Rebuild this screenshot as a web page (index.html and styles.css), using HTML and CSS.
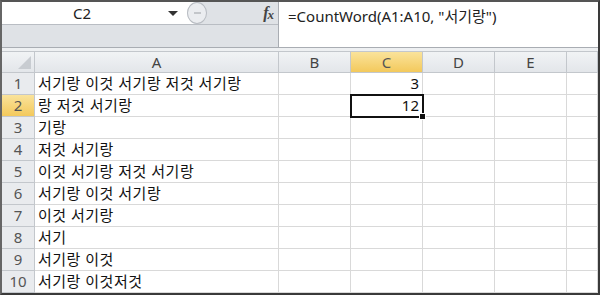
FILE: index.html
```html
<!DOCTYPE html>
<html lang="ko">
<head>
    <meta charset="UTF-8">
    <title>CountWord</title>
    <link rel="stylesheet" href="styles.css">
</head>
<body>
    <div class="frame">
        <div class="formula-bar">
            <div class="left-part">
                <div class="top-row">
                    <div class="name-box">
                        <span class="name">C2</span>
                        <span class="arrow"></span>
                    </div>
                    <div class="fx-box">
                        <span class="knob"><span class="dash"></span></span>
                        <span class="fx">f<span class="x">x</span></span>
                    </div>
                </div>
                <div class="bottom-row"></div>
            </div>
            <div class="formula">=CountWord(A1:A10, "서기랑")</div>
        </div>
        <div class="split"></div>

        <div class="sheet">
            <div class="hd corner"><span class="tri"></span></div>
            <div class="hd col">A</div>
            <div class="hd col">B</div>
            <div class="hd col sel">C</div>
            <div class="hd col">D</div>
            <div class="hd col">E</div>
            <div class="hd col"></div>

            <div class="hd row">1</div>
            <div class="cell">서기랑 이것 서기랑 저것 서기랑</div>
            <div class="cell"></div>
            <div class="cell num">3</div>
            <div class="cell"></div><div class="cell"></div><div class="cell"></div>

            <div class="hd row sel">2</div>
            <div class="cell">랑 저것 서기랑</div>
            <div class="cell"></div>
            <div class="cell num active">12</div>
            <div class="cell"></div><div class="cell"></div><div class="cell"></div>

            <div class="hd row">3</div>
            <div class="cell">기랑</div>
            <div class="cell"></div><div class="cell"></div><div class="cell"></div><div class="cell"></div><div class="cell"></div>

            <div class="hd row">4</div>
            <div class="cell">저것 서기랑</div>
            <div class="cell"></div><div class="cell"></div><div class="cell"></div><div class="cell"></div><div class="cell"></div>

            <div class="hd row">5</div>
            <div class="cell">이것 서기랑 저것 서기랑</div>
            <div class="cell"></div><div class="cell"></div><div class="cell"></div><div class="cell"></div><div class="cell"></div>

            <div class="hd row">6</div>
            <div class="cell">서기랑 이것 서기랑</div>
            <div class="cell"></div><div class="cell"></div><div class="cell"></div><div class="cell"></div><div class="cell"></div>

            <div class="hd row">7</div>
            <div class="cell">이것 서기랑</div>
            <div class="cell"></div><div class="cell"></div><div class="cell"></div><div class="cell"></div><div class="cell"></div>

            <div class="hd row">8</div>
            <div class="cell">서기</div>
            <div class="cell"></div><div class="cell"></div><div class="cell"></div><div class="cell"></div><div class="cell"></div>

            <div class="hd row">9</div>
            <div class="cell">서기랑 이것</div>
            <div class="cell"></div><div class="cell"></div><div class="cell"></div><div class="cell"></div><div class="cell"></div>

            <div class="hd row">10</div>
            <div class="cell">서기랑 이것저것</div>
            <div class="cell"></div><div class="cell"></div><div class="cell"></div><div class="cell"></div><div class="cell"></div>
        </div>
    </div>
</body>
</html>
```

FILE: styles.css
```css
* {
    box-sizing: border-box;
}

body {
    margin: 0;
    font-family: "Noto Sans", "Noto Sans CJK KR", sans-serif;
    background: #fff;
}

.frame {
    width: 600px;
    height: 295px;
    border: 2px solid #3a3a3a;
    border-top-color: #555;
    border-left-color: #666;
    overflow: hidden;
}

/* formula bar */
.formula-bar {
    display: flex;
    height: 45px;
}

.left-part {
    width: 277px;
    border-right: 1px solid #a9adb3;
    display: flex;
    flex-direction: column;
}

.top-row {
    display: flex;
    height: 23px;
    border-bottom: 1px solid #b9bdc3;
}

.name-box {
    width: 185px;
    background: #fff;
    display: flex;
    align-items: center;
}

.name {
    flex: 1;
    text-align: center;
    font-size: 15px;
    color: #222;
    padding-right: 6px;
}

.arrow {
    width: 0;
    height: 0;
    border-left: 5px solid transparent;
    border-right: 5px solid transparent;
    border-top: 5px solid #333;
    margin-right: 9px;
}

.fx-box {
    flex: 1;
    background: #dfe2e6;
    border-radius: 12px 0 0 12px;
    display: flex;
    align-items: center;
    justify-content: space-between;
    padding-right: 5px;
}

.knob {
    width: 20px;
    height: 22px;
    border-radius: 50%;
    border: 1px solid #b8bcc2;
    background: #ebedf0;
    display: flex;
    align-items: center;
    justify-content: center;
}

.dash {
    width: 7px;
    height: 2px;
    background: #c3c6ca;
}

.fx {
    font-family: "Liberation Serif", "DejaVu Serif", serif;
    font-style: italic;
    font-weight: bold;
    font-size: 16px;
    color: #444;
    letter-spacing: -1px;
}

.fx .x {
    font-size: 13px;
    position: relative;
    top: 1px;
}

.bottom-row {
    flex: 1;
    background: #dfe2e6;
}

.formula {
    flex: 1;
    padding: 3px 0 0 9px;
    font-size: 15px;
    color: #222;
    background: #fff;
}

.split {
    height: 5px;
    border-top: 1px solid #a9adb3;
    border-bottom: 1px solid #c3c7cc;
    background: #eef0f2;
}

/* grid */
.sheet {
    display: grid;
    grid-template-columns: 33px 244px 72px 72px 72px 72px 1fr;
    grid-template-rows: 21px repeat(10, 22px);
}

.hd {
    background: linear-gradient(#f1f3f5, #e3e6ea);
    border-right: 1px solid #c3c7cc;
    border-bottom: 1px solid #c3c7cc;
    color: #444;
    font-size: 15px;
    display: flex;
    align-items: center;
    justify-content: center;
    line-height: 1;
}

.hd.row {
    background: #e9ebee;
    color: #555;
}

.hd.sel {
    background: linear-gradient(#fae39b, #f3c95c);
    color: #555;
}

.corner {
    align-items: flex-end;
    justify-content: flex-end;
    padding: 0 3px 3px 0;
}

.tri {
    width: 0;
    height: 0;
    border-left: 13px solid transparent;
    border-bottom: 13px solid #c8ccd1;
}

.cell {
    border-right: 1px solid #d9d9d9;
    border-bottom: 1px solid #d9d9d9;
    font-size: 15px;
    color: #111;
    padding: 0 3px;
    display: flex;
    align-items: center;
    white-space: nowrap;
    line-height: 1;
    letter-spacing: 0.5px;
}

.cell.num {
    justify-content: flex-end;
    letter-spacing: 0;
}

.cell.active {
    position: relative;
    outline: 2px solid #111;
    outline-offset: -1px;
    z-index: 1;
}

.cell.active::after {
    content: "";
    position: absolute;
    right: -4px;
    bottom: -4px;
    width: 5px;
    height: 5px;
    background: #111;
    border: 1px solid #fff;
}
```
